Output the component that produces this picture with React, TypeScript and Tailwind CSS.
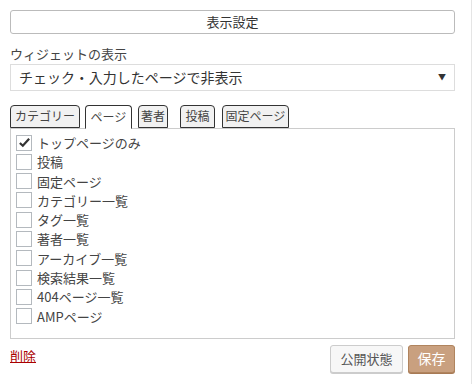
import React from "react";

const tabs = [
  { label: "カテゴリー", w: "w-[70px]", ml: "ml-0", active: false },
  { label: "ページ", w: "w-[47px]", ml: "ml-[5px]", active: true },
  { label: "著者", w: "w-[30px]", ml: "ml-[6px]", active: false },
  { label: "投稿", w: "w-[35px]", ml: "ml-[12px]", active: false },
  { label: "固定ページ", w: "w-[67px]", ml: "ml-[7px]", active: false },
];

const items = [
  { label: "トップページのみ", checked: true },
  { label: "投稿", checked: false },
  { label: "固定ページ", checked: false },
  { label: "カテゴリー一覧", checked: false },
  { label: "タグ一覧", checked: false },
  { label: "著者一覧", checked: false },
  { label: "アーカイブ一覧", checked: false },
  { label: "検索結果一覧", checked: false },
  { label: "404ページ一覧", checked: false },
  { label: "AMPページ", checked: false },
];

function CheckBox({ checked }: { checked: boolean }) {
  return (
    <span className="w-4 h-4 border border-[#b4b9be] bg-white flex items-center justify-center shrink-0">
      {checked && (
        <svg width="13" height="13" viewBox="0 0 14 14">
          <path d="M2 7.5 L5.2 10.5 L12 3" fill="none" stroke="#333" strokeWidth="2.4" />
        </svg>
      )}
    </span>
  );
}

export default function App() {
  return (
    <div
      className="w-[472px] h-[384px] bg-white border-r border-[#e5e5e5] text-[#444]"
      style={{ fontFamily: '"Noto Sans CJK JP", "Noto Sans", sans-serif' }}
    >
      <div className="pl-[10px] pr-[16px] pt-[8px]">
        <button className="w-full h-[24px] border border-[#bbb] rounded-[3px] bg-white text-[13px] leading-none text-[#333]">
          表示設定
        </button>

        <div className="mt-[11px] text-[13px] leading-[18px]">ウィジェットの表示</div>
        <div className="mt-[1px] h-[27px] border border-[#ddd] flex items-center justify-between pl-[8px] pr-[8px] text-[14px] text-[#333]">
          <span>チェック・入力したページで非表示</span>
          <span className="text-[8px] text-[#333]">▼</span>
        </div>

        <div className="mt-[14px] flex items-end h-[23px] relative z-10">
          {tabs.map((t) => (
            <div
              key={t.label}
              className={`${t.w} ${t.ml} h-[23px] border border-[#333] rounded-t-[4px] flex items-center justify-center text-[12px] leading-none ${
                t.active ? "bg-white border-b-white h-[24px] mb-[-1px]" : "bg-[#f1f1f1]"
              }`}
            >
              {t.label}
            </div>
          ))}
        </div>
        <div className="border border-[#ccc] h-[211px] pt-[6px] pl-[5px]">
          <div className="flex flex-col gap-[3.3px]">
            {items.map((it) => (
              <label key={it.label} className="flex items-center gap-[5px] h-4 text-[13px] leading-none">
                <CheckBox checked={it.checked} />
                <span>{it.label}</span>
              </label>
            ))}
          </div>
        </div>

        <div className="mt-[6px] flex items-start justify-between">
          <a className="text-[13px] text-[#a00] underline mt-[1px]">削除</a>
          <div className="flex gap-[5px]">
            <button className="w-[73px] h-[28px] border border-[#ccc] rounded-[3px] bg-[#f7f7f7] text-[13px] text-[#555] shadow-[0_1px_0_#ccc]">
              公開状態
            </button>
            <button className="w-[47px] h-[28px] border border-[#b0845e] rounded-[3px] bg-[#c9a07f] text-[14px] text-white shadow-[0_1px_0_#a77a55]">
              保存
            </button>
          </div>
        </div>
      </div>
    </div>
  );
}
